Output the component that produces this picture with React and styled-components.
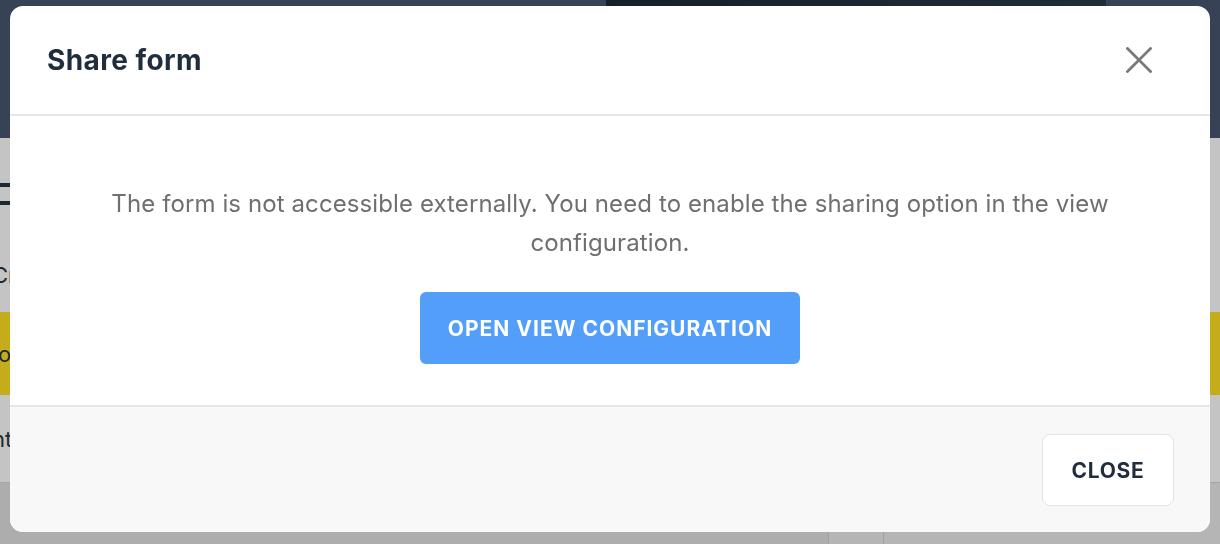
import React from "react";
import styled, { createGlobalStyle } from "styled-components";

const Global = createGlobalStyle`
  html, body { margin: 0; padding: 0; }
  body {
    width: 1220px;
    height: 544px;
    overflow: hidden;
    font-family: Inter, "Noto Sans", "Liberation Sans", sans-serif;
    background: #ffffff;
  }
  * { box-sizing: border-box; }
`;

/* ---------- background page (mostly hidden behind the dialog) ---------- */
const Page = styled.div`
  width: 1220px;
  height: 544px;
  display: flex;
  flex-direction: column;
  overflow: hidden;
  background: #ffffff;
`;

const TopBar = styled.header`
  height: 138px;
  flex: none;
  display: flex;
  align-items: flex-start;
  background: #4a5770;
`;

const TopSpacer = styled.div`
  width: ${(p) => p.$w}px;
  flex: none;
`;

const ActivePane = styled.div`
  width: 500px;
  height: 40px;
  flex: none;
  background: linear-gradient(90deg, #1f2a35, #2b3a4c);
`;

const Content = styled.main`
  flex: 1;
  display: flex;
  flex-direction: column;
  color: #273442;
`;

const TitleRow = styled.div`
  height: 100px;
  display: flex;
  flex-direction: column;
  justify-content: flex-start;
  gap: 14px;
  padding-top: 45px;
`;

const Bar = styled.div`
  width: 12px;
  height: 4px;
  margin-left: -2px;
  background: #273442;
`;

const Row = styled.div`
  height: ${(p) => p.$h}px;
  display: flex;
  align-items: center;
  background: ${(p) => p.$bg || "transparent"};
  border-bottom: ${(p) => (p.$line ? "1px solid #dadada" : "none")};
  font-size: 22px;
`;

const RowText = styled.span`
  margin-left: ${(p) => p.$shift || 0}px;
  white-space: nowrap;
`;

const Bottom = styled.div`
  flex: 1;
  display: flex;
  background: #e2e2e2;
`;

const BottomCell = styled.div`
  width: ${(p) => (p.$w ? `${p.$w}px` : "auto")};
  flex: ${(p) => (p.$w ? "none" : 1)};
  background: ${(p) => p.$bg};
  border-left: ${(p) => (p.$line ? "1px solid #d2d2d2" : "none")};
`;

const Overlay = styled.div`
  position: fixed;
  inset: 0;
  background: rgba(0, 0, 0, 0.23);
  display: flex;
  justify-content: center;
  align-items: flex-start;
  padding-top: 6px;
`;

/* ---------- dialog ---------- */
const Dialog = styled.div`
  width: 1200px;
  height: 526px;
  background: #ffffff;
  border-radius: 13px;
  overflow: hidden;
  display: flex;
  flex-direction: column;
`;

const Header = styled.div`
  height: 110px;
  flex: none;
  display: flex;
  align-items: center;
  justify-content: space-between;
  padding: 0 54px 0 37px;
  border-bottom: 2px solid #e6e6e6;
`;

const Title = styled.h2`
  margin: 0;
  font-size: 28px;
  font-weight: 700;
  color: #1f2d3d;
  letter-spacing: 0.4px;
`;

const IconButton = styled.button`
  width: 34px;
  height: 34px;
  padding: 0;
  border: none;
  background: transparent;
  display: flex;
  align-items: center;
  justify-content: center;
  cursor: pointer;
`;

const Body = styled.div`
  flex: 1;
  display: flex;
  flex-direction: column;
  align-items: center;
  padding: 68px 60px 0;
  gap: 30px;
`;

const Message = styled.p`
  margin: 0;
  text-align: center;
  font-size: 24px;
  line-height: 39px;
  color: #6f6f6f;
  letter-spacing: 0.1px;
`;

const Button = styled.button`
  height: 72px;
  padding: 0 ${(p) => (p.$primary ? 28 : 28.5)}px;
  border-radius: ${(p) => (p.$primary ? 6 : 8)}px;
  border: ${(p) => (p.$primary ? "none" : "1px solid #e4e4e4")};
  background: ${(p) => (p.$primary ? "#529ef9" : "#ffffff")};
  color: ${(p) => (p.$primary ? "#ffffff" : "#1f2d3d")};
  font-family: inherit;
  font-size: 21px;
  font-weight: 700;
  letter-spacing: ${(p) => (p.$primary ? 1 : 0.7)}px;
  cursor: pointer;
`;

const Footer = styled.div`
  height: 127px;
  flex: none;
  display: flex;
  align-items: center;
  justify-content: flex-end;
  padding: 1px 36px 0 0;
  background: #f8f8f8;
  border-top: 2px solid #e6e6e6;
`;

const CloseIcon = () => (
  <svg width="26" height="26" viewBox="0 0 26 26" fill="none">
    <path
      d="M1.5 1.5 L24.5 24.5 M24.5 1.5 L1.5 24.5"
      stroke="#7a7a7a"
      strokeWidth="2.8"
      strokeLinecap="square"
    />
  </svg>
);

export default function App() {
  return (
    <>
      <Global />
      <Page>
        <TopBar>
          <TopSpacer $w={606} />
          <ActivePane />
        </TopBar>
        <Content>
          <TitleRow>
            <Bar />
            <Bar />
          </TitleRow>
          <Row $h={74}>
            <RowText $shift={-8}>Cr</RowText>
          </Row>
          <Row $h={83} $bg="#ffe024">
            <RowText $shift={-2}>o</RowText>
          </Row>
          <Row $h={88} $line>
            <RowText $shift={-8}>nt</RowText>
          </Row>
          <Bottom>
            <BottomCell $w={828} $bg="#e2e2e2" />
            <BottomCell $w={55} $bg="#ececec" $line />
            <BottomCell $bg="#ececec" $line />
          </Bottom>
        </Content>
      </Page>
      <Overlay>
        <Dialog role="dialog" aria-labelledby="share-title">
          <Header>
            <Title id="share-title">Share form</Title>
            <IconButton aria-label="Close">
              <CloseIcon />
            </IconButton>
          </Header>
          <Body>
            <Message>
              The form is not accessible externally. You need to enable the
              sharing option in the view configuration.
            </Message>
            <Button $primary>OPEN VIEW CONFIGURATION</Button>
          </Body>
          <Footer>
            <Button>CLOSE</Button>
          </Footer>
        </Dialog>
      </Overlay>
    </>
  );
}
